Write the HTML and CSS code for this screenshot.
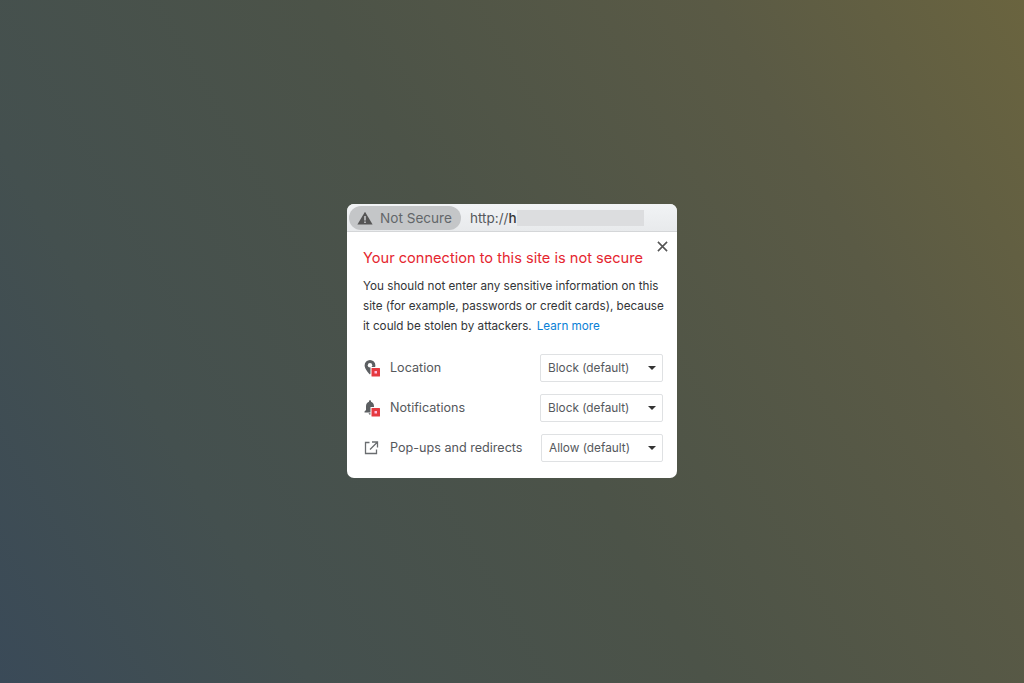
FILE: index.html
```html
<!DOCTYPE html>
<html lang="en">
<head>
<meta charset="utf-8">
<title>Not Secure</title>
<link rel="stylesheet" href="styles.css">
</head>
<body>
<main class="card">
  <header class="bar">
    <div class="pill">
      <svg class="warn" viewBox="0 0 16 14" width="16" height="14"><path d="M8 .8 15.6 13.6H.4Z" fill="#555"/><path d="M7.200 5h1.600v4.600H7.200zM7.200 10.500h1.600v1.500H7.200z" fill="#c4c6c8"/></svg>
      <span>Not Secure</span>
    </div>
    <div class="url">http://<b>h</b><span class="redact"></span></div>
  </header>
  <section class="body">
    <button class="close" aria-label="Close"><svg viewBox="0 0 12 12" width="11" height="11"><path d="M1 1 11 11M11 1 1 11" stroke="#555" stroke-width="1.700" fill="none"/></svg></button>
    <h1>Your connection to this site is not secure</h1>
    <p>You should not enter any sensitive information on this site (for example, passwords or credit cards), because it could be stolen by attackers.<a href="#">Learn more</a></p>
    <ul class="perms">
      <li>
        <svg class="ico" viewBox="0 0 18 18" width="18" height="18"><path d="M7 1a5.400 5.400 0 0 0-5.400 5.400C1.600 10 7 15.500 7 15.500s5.400-5.500 5.400-9.100A5.400 5.400 0 0 0 7 1Z" fill="#5c5f62"/><circle cx="7" cy="6.200" r="2.200" fill="#fff"/><rect x="7.500" y="8" width="10" height="10" fill="#fff"/><rect x="8.500" y="9" width="8.500" height="8.500" rx=".6" fill="#e53a40"/><rect x="11.500" y="12" width="2.500" height="2.500" fill="#fbd"/></svg>
        <span class="label">Location</span>
        <div class="sel">Block (default)<i></i></div>
      </li>
      <li>
        <svg class="ico" viewBox="0 0 18 18" width="18" height="18"><path d="M7 1.200c-.6 0-1 .4-1 1v.6C3.900 3.400 3 5.300 3 7.300v3.600L1.500 12.500v1h11v-1L11 10.900V7.300c0-2-.9-3.900-3-4.500v-.6c0-.6-.4-1-1-1ZM5.600 14.300a1.400 1.400 0 0 0 2.800 0Z" fill="#5c5f62"/><rect x="7.500" y="8" width="10" height="10" fill="#fff"/><rect x="8.500" y="9" width="8.500" height="8.500" rx=".6" fill="#e53a40"/><rect x="11.500" y="12" width="2.500" height="2.500" fill="#fbd"/></svg>
        <span class="label">Notifications</span>
        <div class="sel">Block (default)<i></i></div>
      </li>
      <li>
        <svg class="ico" viewBox="0 0 18 18" width="18" height="18"><path d="M6.500 3.500H2.500v11h11v-4M9 3h5.500v5.500M14.500 3 7 10.500" stroke="#6a6d70" stroke-width="1.300" fill="none"/></svg>
        <span class="label">Pop-ups and redirects</span>
        <div class="sel allow">Allow (default)<i></i></div>
      </li>
    </ul>
  </section>
</main>
</body>
</html>
```

FILE: styles.css
```css
* { box-sizing: border-box; }
html, body { height: 100%; }
body {
  margin: 0;
  height: 683px;
  padding-bottom: 1px;
  display: flex;
  align-items: center;
  justify-content: center;
  overflow: hidden;
  font-family: "Inter", "Liberation Sans", sans-serif;
  background: linear-gradient(60deg, #3a4a58 0%, #44504f 22%, #4c5348 50%, #5a5a45 78%, #6a643f 100%);
}
.card {
  width: 330px;
  height: 274px;
  background: #fff;
  border-radius: 7px;
  overflow: hidden;
  display: flex;
  flex-direction: column;
}
.bar {
  height: 28px;
  flex: none;
  background: linear-gradient(#f1f3f5, #e8eaec);
  border-bottom: 1px solid #d4d6d8;
  display: flex;
  align-items: center;
  padding-left: 2px;
}
.pill {
  width: 112px;
  height: 24px;
  border-radius: 12px;
  background: #c4c6c8;
  display: flex;
  align-items: center;
  gap: 7px;
  padding-left: 8px;
  font-size: 13.600px;
  color: #63666a;
}
.warn { flex: none; }
.url {
  margin-left: 9px;
  display: flex;
  align-items: center;
  font-size: 13.500px;
  color: #55585c;
  white-space: pre;
}
.url b { color: #333; font-weight: 500; }
.redact {
  width: 127px;
  height: 16px;
  background: #dcdddf;
}
.body {
  position: relative;
  flex: 1;
  padding: 17px 14px 0 16px;
}
.close {
  position: absolute;
  top: 9px;
  right: 9px;
  width: 11px;
  height: 11px;
  padding: 0;
  border: 0;
  background: none;
  display: flex;
}
h1 {
  margin: 0;
  font-size: 14.600px;
  font-weight: 400;
  line-height: 18px;
  color: #e5262f;
  white-space: nowrap;
}
p {
  margin: 10.400px -4px 0 0;
  font-size: 11.700px;
  line-height: 19.800px;
  color: #333538;
}
a {
  color: #0a7fd6;
  text-decoration: none;
  margin-left: 5px;
}
.perms {
  list-style: none;
  margin: 17px 0 0;
  padding: 0;
  display: flex;
  flex-direction: column;
  gap: 12px;
}
.perms li {
  height: 28px;
  display: flex;
  align-items: center;
}
.ico { flex: none; margin-right: 9px; }
.label {
  flex: 1;
  font-size: 12.600px;
  color: #55585c;
  padding-bottom: 1px;
}
.sel {
  width: 123px;
  height: 28px;
  border: 1px solid #dfe1e3;
  border-radius: 2px;
  position: relative;
  padding-left: 7px;
  display: flex;
  align-items: center;
  font-size: 11.800px;
  color: #55585c;
  background: #fff;
}
.sel.allow { width: 122px; }
.sel i {
  position: absolute;
  right: 6px;
  top: 11px;
  border-left: 4px solid transparent;
  border-right: 4px solid transparent;
  border-top: 4px solid #333;
}
```
